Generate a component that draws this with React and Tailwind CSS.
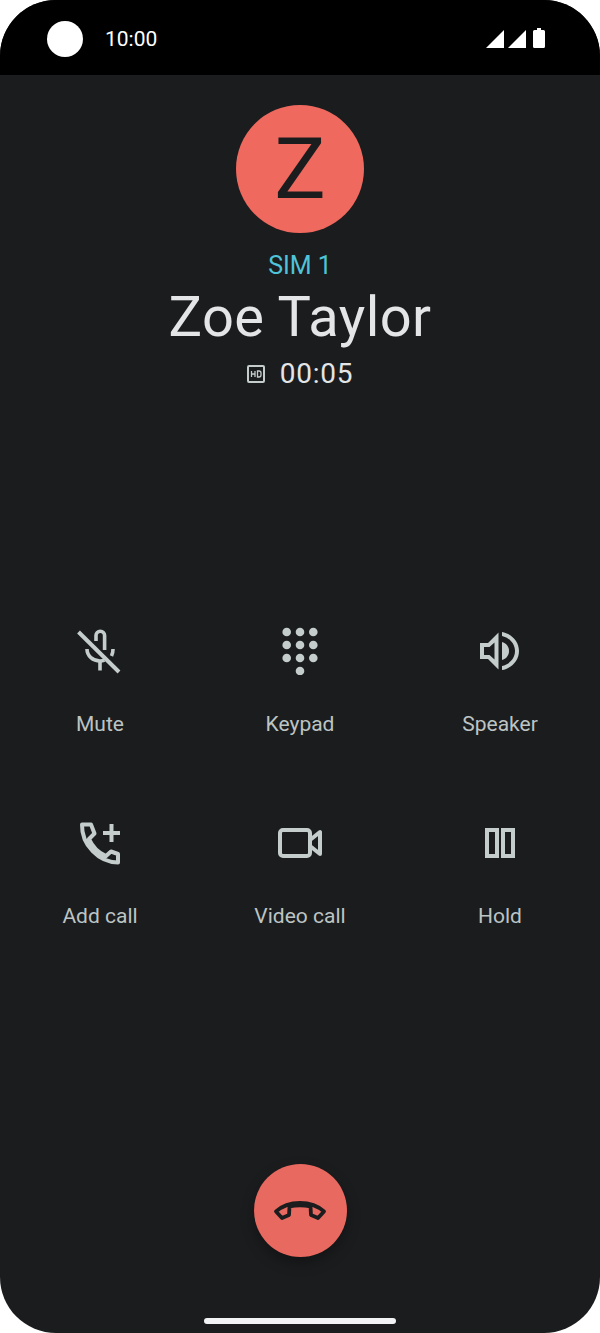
const FONT = "font-['Roboto',sans-serif]";

const MuteIcon = () => (
  <svg width="48" height="48" viewBox="0 0 48 48" fill="none" stroke="currentColor" strokeWidth="3.600">
    <path d="M20 14V8.500a4.300 4.300 0 0 1 8.600 0V23" />
    <path d="M11 22c0 7 6 12 13 12 1.500 0 3-.2 4.500-.8M37 22c0 2.500-.5 5-1.500 7" />
    <path d="M24 34v9.500" />
    <path d="M2.500 5 43 45" strokeWidth="4" />
  </svg>
);

const KeypadIcon = () => (
  <svg width="48" height="48" viewBox="0 0 48 48" fill="currentColor">
    {[5, 18, 31].flatMap((y) =>
      [10.700, 24, 37.300].map((x) => <circle key={`${x}-${y}`} cx={x} cy={y} r="4.300" />)
    )}
    <circle cx="24" cy="44" r="4.300" />
  </svg>
);

const SpeakerIcon = () => (
  <svg width="48" height="48" viewBox="0 0 48 48" fill="currentColor">
    <path fillRule="evenodd" d="M4 16h8L22.500 5.500v37L12 32H4zM8 20v8h5.500l5 4.500v-17l-5 4.500z" />
    <path d="M26 5c9 1.500 17 9 17 19s-8 17.500-17 19v-4c7-1.500 13-7.500 13-15S33 10.500 26 9z" />
    <path d="M26 15c4 1 7 4.500 7 9s-3 8-7 9z" />
  </svg>
);

const AddCallIcon = () => (
  <svg width="48" height="48" viewBox="0 0 48 48" fill="none" stroke="currentColor" strokeWidth="4" strokeLinejoin="round">
    <path d="M6 5.500H15L18.500 14.500L13 20C17 29 23 34 30 37L35 32.500L42 35V43.500C23 43.500 5.500 26 6 5.500Z" />
    <path d="M27 14H44M35.500 5V23" />
  </svg>
);

const VideoIcon = () => (
  <svg width="48" height="48" viewBox="0 0 48 48" fill="none" stroke="currentColor" strokeWidth="4" strokeLinejoin="round">
    <rect x="4" y="11" width="30" height="26" rx="3" />
    <path d="M34 21 44 13V35L34 27" />
  </svg>
);

const HoldIcon = () => (
  <svg width="48" height="48" viewBox="0 0 48 48" fill="none" stroke="currentColor" strokeWidth="4">
    <rect x="11" y="11" width="10" height="26" />
    <rect x="27" y="11" width="10" height="26" />
  </svg>
);

const EndCallIcon = () => (
  <svg width="56" height="24" viewBox="0 0 56 24" fill="none" stroke="#1b1c1e" strokeWidth="3.800" strokeLinejoin="round">
    <path d="M4 12.500C10 7 18 4 28 4s18 3 24 8.500L46 19l-7-3-.5-8.500C32 6 24 6 17.500 7.500L17 16l-7 3z" />
  </svg>
);

const actions = [
  { label: "Mute", icon: <MuteIcon /> },
  { label: "Keypad", icon: <KeypadIcon /> },
  { label: "Speaker", icon: <SpeakerIcon /> },
  { label: "Add call", icon: <AddCallIcon /> },
  { label: "Video call", icon: <VideoIcon /> },
  { label: "Hold", icon: <HoldIcon /> },
];

export default function App() {
  return (
    <div className={`h-[1333px] w-[600px] bg-white ${FONT}`}>
      <div className="flex h-full flex-col items-center overflow-hidden rounded-[56px] bg-[#1b1c1e]">
        {/* Status bar */}
        <div className="flex h-[75px] w-full shrink-0 items-center bg-black pl-[47px] pr-[55px] pt-[3px] text-white">
          <div className="h-9 w-9 rounded-full bg-white" />
          <span className="ml-[22px] text-[21px] leading-none">10:00</span>
          <div className="ml-auto mb-[3px] flex items-end gap-[7px]">
            <svg width="40" height="18" viewBox="0 0 40 18" fill="white">
              <path d="M0 18 18 0V18Z" />
              <path d="M22 18 40 0V18Z" />
            </svg>
            <svg width="12" height="20" viewBox="0 0 12 20" fill="white">
              <path d="M4 0h4v2h2.500a1.500 1.500 0 0 1 1.500 1.500V18.500a1.500 1.500 0 0 1-1.500 1.500H1.500A1.500 1.500 0 0 1 0 18.500V3.500A1.500 1.500 0 0 1 1.500 2H4z" />
            </svg>
          </div>
        </div>

        {/* Contact */}
        <div className="mt-[30px] flex h-32 w-32 items-center justify-center rounded-full bg-[#f0695f] text-[86px] leading-none text-[#1b1c1e]">
          Z
        </div>
        <div className="mt-[17px] text-[25px] leading-8 text-[#4fc3d9]">SIM 1</div>
        <div className="mt-[3px] text-[56px] leading-[64px] tracking-[0.4px] text-[#e3e5e6]">Zoe Taylor</div>
        <div className="mt-[9px] flex h-8 items-center gap-[15px]">
          <svg width="18" height="18" viewBox="0 0 18 18" fill="none" className="text-[#c4cccc]">
            <rect x="1" y="1" width="16" height="16" rx="1" stroke="currentColor" strokeWidth="2" />
            <path d="M4.500 6v6M8 6v6M4.500 9H8M10.500 6v6h1.500a2 2 0 0 0 2-2V8a2 2 0 0 0-2-2z" stroke="currentColor" strokeWidth="1.300" />
          </svg>
          <span className="text-[28px] leading-8 tracking-[0.8px] text-[#e3e5e6]">00:05</span>
        </div>

        {/* Call actions */}
        <div className="mt-[237px] grid w-full grid-cols-3 gap-y-[40px]">
          {actions.map((a) => (
            <div key={a.label} className="flex h-[152px] flex-col items-center text-[#c4cccc]">
              {a.icon}
              <span className="mt-[35px] text-[21px] leading-7 text-[#bcc4c4]">{a.label}</span>
            </div>
          ))}
        </div>

        {/* Hang up */}
        <button className="mt-[193px] flex h-[93px] w-[93px] shrink-0 items-center justify-center rounded-full bg-[#e8695f] shadow-[0_6px_14px_rgba(0,0,0,0.3)]">
          <EndCallIcon />
        </button>
        <div className="mt-[61px] h-[6px] w-[192px] shrink-0 rounded-full bg-[#f1f3f4]" />
      </div>
    </div>
  );
}
